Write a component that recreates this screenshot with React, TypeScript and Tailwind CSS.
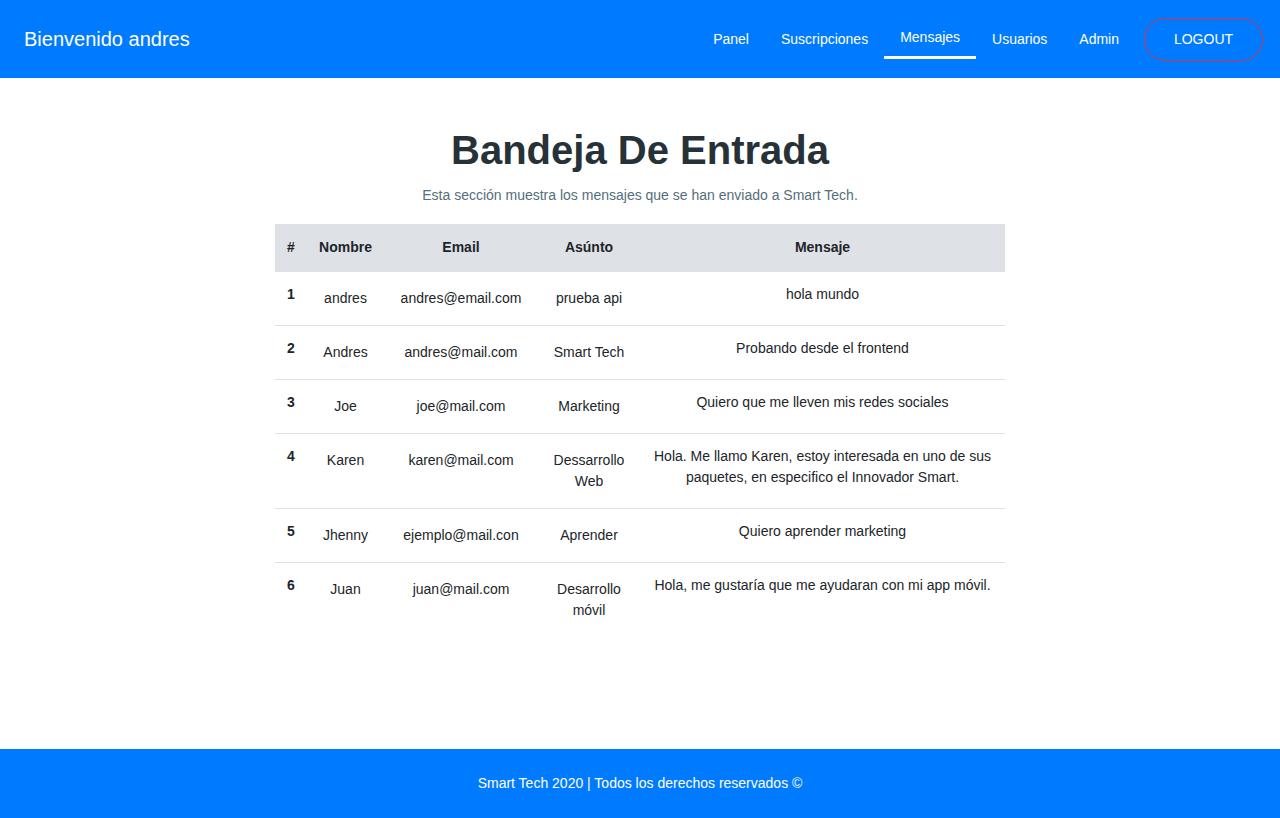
import React from "react";

const navItems = ["Panel", "Suscripciones", "Mensajes", "Usuarios", "Admin"];

const mensajes = [
  { id: 1, nombre: "andres", email: "andres@email.com", asunto: "prueba api", mensaje: "hola mundo" },
  { id: 2, nombre: "Andres", email: "andres@mail.com", asunto: "Smart Tech", mensaje: "Probando desde el frontend" },
  { id: 3, nombre: "Joe", email: "joe@mail.com", asunto: "Marketing", mensaje: "Quiero que me lleven mis redes sociales" },
  {
    id: 4,
    nombre: "Karen",
    email: "karen@mail.com",
    asunto: "Dessarrollo Web",
    mensaje: "Hola. Me llamo Karen, estoy interesada en uno de sus paquetes, en especifico el Innovador Smart.",
  },
  { id: 5, nombre: "Jhenny", email: "ejemplo@mail.con", asunto: "Aprender", mensaje: "Quiero aprender marketing" },
  { id: 6, nombre: "Juan", email: "juan@mail.com", asunto: "Desarrollo móvil", mensaje: "Hola, me gustaría que me ayudaran con mi app móvil." },
];

export default function App() {
  return (
    <div className="min-h-screen flex flex-col bg-white font-['Liberation_Sans',Arial,sans-serif] text-[#212529] text-[14px] leading-[21px]">
      <header className="h-[78px] bg-[#007bff] flex items-center pl-6 pr-[17px]">
        <h2 className="text-white text-[20px] leading-[24px]">Bienvenido andres</h2>
        <nav className="ml-auto flex items-center h-full">
          {navItems.map((item) => {
            const active = item === "Mensajes";
            return (
              <a
                key={item}
                href="#"
                className={`relative px-4 text-white h-full flex items-center ${active ? "pb-[4px]" : ""}`}
              >
                {item}
                {active && <span className="absolute left-0 right-0 top-[56px] h-[3px] bg-white" />}
              </a>
            );
          })}
          <button className="ml-[9px] h-[43px] w-[119px] rounded-full border border-[#dc3545] text-white text-[14px]">
            LOGOUT
          </button>
        </nav>
      </header>

      <main className="flex-1 flex flex-col items-center pt-[48px]">
        <h1 className="text-[40px] leading-[48px] font-bold text-[#263238]">Bandeja De Entrada</h1>
        <p className="mt-[11px] text-[#546e7a]">Esta sección muestra los mensajes que se han enviado a Smart Tech.</p>

        <table className="mt-[18px] w-[730px] table-fixed border-collapse text-center">
          <colgroup>
            <col className="w-[32px]" />
            <col className="w-[77px]" />
            <col className="w-[154px]" />
            <col className="w-[102px]" />
            <col className="w-[365px]" />
          </colgroup>
          <thead className="bg-[#dee2e6]">
            <tr>
              <th className="py-[13px] font-bold">#</th>
              <th className="py-[13px] font-bold">Nombre</th>
              <th className="py-[13px] font-bold">Email</th>
              <th className="py-[13px] font-bold">Asúnto</th>
              <th className="py-[13px] font-bold">Mensaje</th>
            </tr>
          </thead>
          <tbody>
            {mensajes.map((m) => (
              <tr key={m.id} className="border-t border-[#dee2e6] align-top">
                <th className="p-3 font-bold">{m.id}</th>
                <td className="px-2 py-4">{m.nombre}</td>
                <td className="px-2 py-4">{m.email}</td>
                <td className="px-3 py-4">{m.asunto}</td>
                <td className="p-3">{m.mensaje}</td>
              </tr>
            ))}
          </tbody>
        </table>
      </main>

      <footer className="h-[69px] bg-[#007bff] flex items-center justify-center text-white">
        Smart Tech 2020 | Todos los derechos reservados ©
      </footer>
    </div>
  );
}
